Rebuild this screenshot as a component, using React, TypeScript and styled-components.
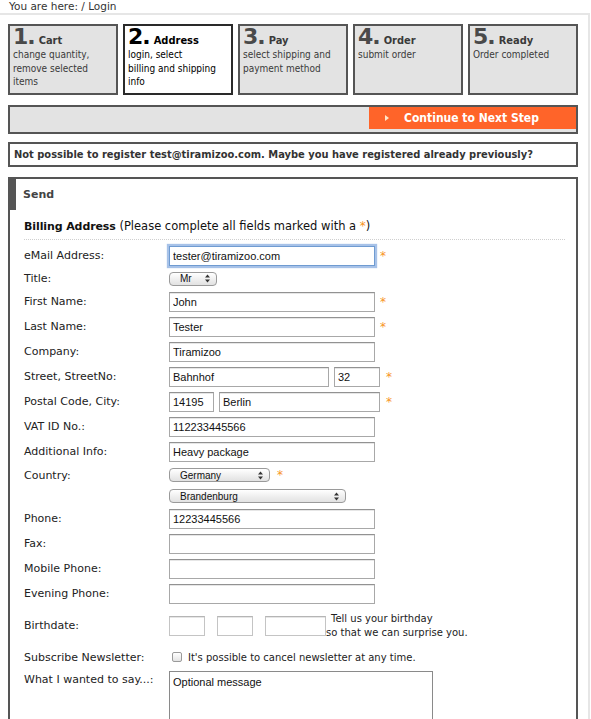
import React from "react";
import styled, { createGlobalStyle } from "styled-components";

const GlobalStyle = createGlobalStyle`
  html, body {
    margin: 0;
    padding: 0;
    background: #fff;
  }
  body {
    font-family: "DejaVu Sans", Verdana, sans-serif;
    font-size: 11px;
    color: #222;
  }
`;

const condensed = `"DejaVu Sans Condensed", "DejaVu Sans", Verdana, sans-serif`;
const inputFont = `"Liberation Sans", Arial, sans-serif`;

const Breadcrumb = styled.div`
  height: 13px;
  line-height: 13px;
  padding-left: 9px;
  font-size: 10.5px;
  color: #333;
`;

const Page = styled.div`
  width: 570px;
  padding: 9px 10px 0 8px;
  border-top: 2px solid #e6e6e6;
  border-right: 2px solid #e6e6e6;
`;

const Steps = styled.div`
  display: flex;
  gap: 5px;
`;

const StepBox = styled.div<{ $active?: boolean }>`
  box-sizing: border-box;
  width: 110px;
  height: 71px;
  padding: 0 3px;
  border: 2px solid ${(p) => (p.$active ? "#2a2a2a" : "#555")};
  background: ${(p) => (p.$active ? "#fff" : "#e3e3e3")};
  color: ${(p) => (p.$active ? "#000" : "#3a3a3a")};
  font-family: ${condensed};
`;

const StepHead = styled.div`
  height: 22px;
  line-height: 22px;
  white-space: nowrap;
`;

const StepNum = styled.span<{ $active?: boolean }>`
  font-family: "DejaVu Sans", sans-serif;
  font-size: 22px;
  font-weight: bold;
  letter-spacing: -1px;
  color: ${(p) => (p.$active ? "#000" : "#4a4a4a")};
`;

const StepTitle = styled.span`
  margin-left: 4px;
  font-size: 11px;
  font-weight: bold;
`;

const StepText = styled.div`
  font-size: 10px;
  line-height: 13.5px;
`;

const ContinueBar = styled.div`
  box-sizing: border-box;
  height: 29px;
  margin-top: 10px;
  border: 2px solid #555;
  background: #e3e3e3;
  display: flex;
  justify-content: flex-end;
  align-items: flex-start;
`;

const NextButton = styled.button`
  box-sizing: border-box;
  width: 207px;
  height: 22px;
  padding: 0 0 0 16px;
  border: none;
  background: #ff6429;
  color: #fff;
  font-family: ${condensed};
  font-size: 12px;
  font-weight: bold;
  display: flex;
  align-items: center;
  gap: 15px;
  cursor: pointer;
`;

const Message = styled.div`
  box-sizing: border-box;
  height: 25px;
  margin-top: 8px;
  padding: 0 4px;
  border: 2px solid #555;
  line-height: 21px;
  font-family: ${condensed};
  font-size: 11px;
  font-weight: bold;
  color: #333;
  white-space: nowrap;
`;

const SendBox = styled.div`
  margin-top: 10px;
  border: 2px solid #555;
`;

const SendHeader = styled.div`
  height: 31px;
  line-height: 31px;
  padding-left: 7px;
  border-left: 6px solid #555;
  font-weight: bold;
  color: #444;
`;

const SendBody = styled.div`
  padding: 0 11px 20px 14px;
`;

const BillingHeading = styled.h3`
  margin: 0;
  padding: 8px 0 4px;
  line-height: 16px;
  font-size: 11.5px;
  font-weight: normal;
  color: #111;
  border-bottom: 1px dotted #cfcfcf;

  strong {
    font-size: 11px;
    letter-spacing: -0.1px;
  }
`;

const Form = styled.form`
  padding-top: 3px;
`;

const Row = styled.div<{ $h?: number; $top?: boolean }>`
  display: flex;
  align-items: ${(p) => (p.$top ? "flex-start" : "center")};
  height: ${(p) => p.$h ?? 25}px;
`;

const Label = styled.label<{ $pad?: number }>`
  flex: none;
  width: 145px;
  padding-top: ${(p) => p.$pad ?? 1}px;
  line-height: 14px;
  color: #222;
`;

const Fields = styled.div`
  display: flex;
  align-items: center;
  gap: 5px;
`;

const Input = styled.input<{ $w?: number; $focus?: boolean; $light?: boolean }>`
  box-sizing: border-box;
  width: ${(p) => p.$w ?? 206}px;
  height: 20px;
  margin: 0;
  padding: 0 3px;
  border: 1px solid ${(p) => (p.$focus ? "#6f9bd1" : p.$light ? "#c4c4c4" : "#a8a8a8")};
  border-top-color: ${(p) => (p.$focus ? "#6f9bd1" : p.$light ? "#b5b5b5" : "#929292")};
  border-radius: 0;
  box-shadow: ${(p) =>
    p.$focus ? "0 0 1px 2px rgba(120, 162, 220, 0.65)" : "inset 0 1px 0 #e6e6e6"};
  font-family: ${inputFont};
  font-size: 11px;
  color: #111;
  outline: none;
`;

const Required = styled.span<{ $gap?: number }>`
  margin-left: ${(p) => p.$gap ?? 6}px;
  font-size: 12px;
  line-height: 1;
  color: #f7941e;
`;

const SelectBox = styled.div<{ $w: number }>`
  box-sizing: border-box;
  width: ${(p) => p.$w}px;
  height: 14px;
  padding: 0 6px 0 10px;
  border: 1px solid #9a9a9a;
  border-radius: 4px;
  background: linear-gradient(#ffffff, #ededed 60%, #e2e2e2);
  display: flex;
  align-items: center;
  justify-content: space-between;
  font-family: ${inputFont};
  font-size: 10px;
  color: #111;
`;

const Arrows = () => (
  <svg width="5" height="9" viewBox="0 0 5 9">
    <polygon points="0,3.5 2.5,0.5 5,3.5" fill="#333" />
    <polygon points="0,5.5 2.5,8.5 5,5.5" fill="#333" />
  </svg>
);

const BirthFields = styled.div`
  display: flex;
  align-items: center;
  gap: 12px;
`;

const BirthNote = styled.div`
  font-size: 10px;
  line-height: 14px;
  color: #222;
  text-indent: 5px;
  white-space: nowrap;

  span {
    display: block;
    text-indent: 0;
  }
`;

const CheckLine = styled.label`
  display: flex;
  align-items: center;
  gap: 6px;
  padding-left: 3px;
  font-size: 10px;
  color: #222;
`;

const CheckBox = styled.span`
  box-sizing: border-box;
  width: 10px;
  height: 10px;
  border: 1px solid #9a9a9a;
  border-radius: 2px;
  background: linear-gradient(#fff, #e4e4e4);
`;

const Message2 = styled.textarea`
  box-sizing: border-box;
  width: 264px;
  height: 80px;
  margin: 2px 0 0;
  padding: 3px 3px;
  border: 1px solid #8a8a8a;
  font-family: ${inputFont};
  font-size: 11px;
  line-height: 14px;
  color: #111;
  resize: none;
  outline: none;
`;

const steps = [
  { n: "1", title: "Cart", lines: ["change quantity,", "remove selected", "items"] },
  { n: "2", title: "Address", lines: ["login, select", "billing and shipping", "info"], active: true },
  { n: "3", title: "Pay", lines: ["select shipping and", "payment method"] },
  { n: "4", title: "Order", lines: ["submit order"] },
  { n: "5", title: "Ready", lines: ["Order completed"] },
];

const plainFields: [string, string][] = [
  ["VAT ID No.:", "112233445566"],
  ["Additional Info:", "Heavy package"],
];

export default function App() {
  return (
    <>
      <GlobalStyle />
      <Breadcrumb>You are here: / Login</Breadcrumb>
      <Page>
        <Steps>
          {steps.map((s) => (
            <StepBox key={s.n} $active={s.active}>
              <StepHead>
                <StepNum $active={s.active}>{s.n}.</StepNum>
                <StepTitle>{s.title}</StepTitle>
              </StepHead>
              <StepText>
                {s.lines.map((l) => (
                  <div key={l}>{l}</div>
                ))}
              </StepText>
            </StepBox>
          ))}
        </Steps>

        <ContinueBar>
          <NextButton type="button">
            <svg width="4" height="6" viewBox="0 0 4 6">
              <polygon points="0,0 4,3 0,6" fill="#ffe6c8" />
            </svg>
            Continue to Next Step
          </NextButton>
        </ContinueBar>

        <Message>
          Not possible to register test@tiramizoo.com. Maybe you have registered already previously?
        </Message>

        <SendBox>
          <SendHeader>Send</SendHeader>
          <SendBody>
            <BillingHeading>
              <strong>Billing Address</strong> (Please complete all fields marked with a{" "}
              <Required $gap={0}>*</Required>)
            </BillingHeading>
            <Form onSubmit={(e) => e.preventDefault()}>
              <Row>
                <Label>eMail Address:</Label>
                <Input $focus defaultValue="tester@tiramizoo.com" />
                <Required $gap={5}>*</Required>
              </Row>
              <Row $h={21}>
                <Label>Title:</Label>
                <SelectBox $w={48}>
                  Mr <Arrows />
                </SelectBox>
              </Row>
              <Row>
                <Label>First Name:</Label>
                <Input defaultValue="John" />
                <Required $gap={5}>*</Required>
              </Row>
              <Row>
                <Label>Last Name:</Label>
                <Input defaultValue="Tester" />
                <Required $gap={5}>*</Required>
              </Row>
              <Row>
                <Label>Company:</Label>
                <Input defaultValue="Tiramizoo" />
              </Row>
              <Row>
                <Label>Street, StreetNo:</Label>
                <Fields>
                  <Input $w={160} defaultValue="Bahnhof" />
                  <Input $w={46} defaultValue="32" />
                </Fields>
                <Required>*</Required>
              </Row>
              <Row>
                <Label>Postal Code, City:</Label>
                <Fields>
                  <Input $w={45} defaultValue="14195" />
                  <Input $w={161} defaultValue="Berlin" />
                </Fields>
                <Required>*</Required>
              </Row>
              {plainFields.map(([label, value]) => (
                <Row key={label}>
                  <Label>{label}</Label>
                  <Input defaultValue={value} />
                </Row>
              ))}
              <Row $h={22}>
                <Label>Country:</Label>
                <SelectBox $w={101}>
                  Germany <Arrows />
                </SelectBox>
                <Required $gap={7}>*</Required>
              </Row>
              <Row $h={20}>
                <Label />
                <SelectBox $w={177}>
                  Brandenburg <Arrows />
                </SelectBox>
              </Row>
              <Row>
                <Label>Phone:</Label>
                <Input defaultValue="12233445566" />
              </Row>
              {["Fax:", "Mobile Phone:", "Evening Phone:"].map((label) => (
                <Row key={label}>
                  <Label>{label}</Label>
                  <Input />
                </Row>
              ))}
              <Row $h={39}>
                <Label>Birthdate:</Label>
                <BirthFields>
                  <Input $w={36} $light />
                  <Input $w={36} $light />
                  <Input $w={61} $light />
                </BirthFields>
                <BirthNote>
                  Tell us your birthday
                  <span>so that we can surprise you.</span>
                </BirthNote>
              </Row>
              <Row $h={24}>
                <Label>Subscribe Newsletter:</Label>
                <CheckLine>
                  <CheckBox />
                  It's possible to cancel newsletter at any time.
                </CheckLine>
              </Row>
              <Row $h={90} $top>
                <Label $pad={4}>What I wanted to say...:</Label>
                <Message2 defaultValue="Optional message" />
              </Row>
            </Form>
          </SendBody>
        </SendBox>
      </Page>
    </>
  );
}
